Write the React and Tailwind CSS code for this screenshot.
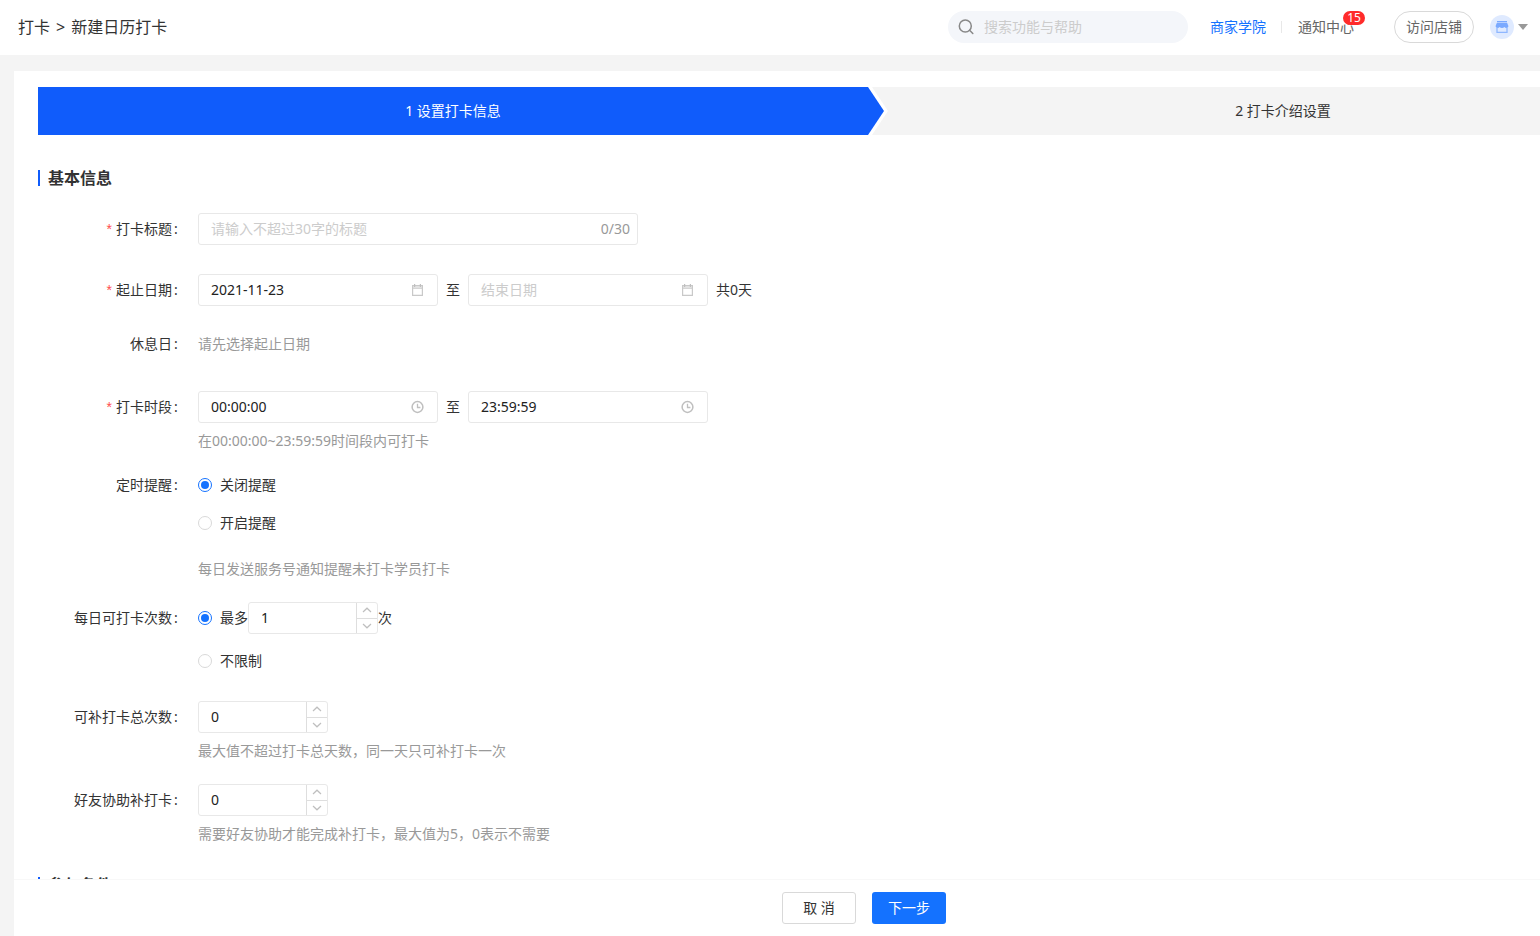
import { useState } from "react";

function SearchIcon() {
  return (
    <svg className="size-4 shrink-0" viewBox="0 0 16 16" fill="none" stroke="#888" strokeWidth="1.5" aria-hidden="true">
      <circle cx="7.3" cy="7" r="6" />
      <path d="M11.6 11.3 L14.8 14.5" strokeLinecap="round" />
    </svg>
  );
}

function CalendarIcon() {
  return (
    <svg className="size-3.5" viewBox="0 0 14 14" fill="currentColor" aria-hidden="true">
      <path d="M1 2 H12 V13 H1 Z M2.2 5.8 V11.8 H10.8 V5.8 Z" fillRule="evenodd" opacity="0.85" />
      <path d="M2.2 3.2 H10.8 V4.8 H2.2 Z" fill="#fff" opacity="0.6" />
      <path d="M3 1 H4.2 V4 H3 Z M8.8 1 H10 V4 H8.8 Z" />
    </svg>
  );
}

function ClockIcon() {
  return (
    <svg className="size-3.5" viewBox="0 0 14 14" fill="none" stroke="currentColor" aria-hidden="true">
      <circle cx="6.5" cy="7" r="5.4" strokeWidth="1.5" />
      <path d="M6.5 3.8 V7.5 H9.4" strokeWidth="1.3" />
    </svg>
  );
}

function Chevron({ up }) {
  return (
    <svg className="h-1.5 w-2.5" viewBox="0 0 10 6" fill="none" stroke="#bfbfbf" strokeWidth="1.2" aria-hidden="true">
      <path d={up ? "M1 5 L5 1.2 L9 5" : "M1 1 L5 4.8 L9 1"} />
    </svg>
  );
}

function ShopAvatar() {
  return (
    <svg className="size-6" viewBox="0 0 24 24" aria-hidden="true">
      <circle cx="12" cy="12" r="12" fill="#dfeaff" />
      <path d="M7 6 H17 V7.4 H7 Z" fill="#7aa9ff" />
      <path
        d="M6.8 8 H17.2 L18.4 11 C18.4 12.2 17.3 12.9 16.4 12.9 C15.5 12.9 15 12.5 14.4 12 C13.8 12.6 12.9 12.9 12 12.9 C11.1 12.9 10.2 12.6 9.6 12 C9 12.5 8.5 12.9 7.6 12.9 C6.7 12.9 5.6 12.2 5.6 11 Z"
        fill="#7aa9ff"
      />
      <path d="M7 12.6 V17.4 H17 V12.6" fill="none" stroke="#8fb7ff" strokeWidth="1.3" />
    </svg>
  );
}

function Header() {
  return (
    <header className="flex h-[55px] shrink-0 items-center justify-between bg-white pb-px pl-[18px] pr-3">
      <nav className="flex items-center gap-1.5 text-base text-[#333]" aria-label="位置">
        <a href="#list">打卡</a>
        <span>&gt;</span>
        <span>新建日历打卡</span>
      </nav>
      <div className="flex items-center">
        <label className="mr-[22px] flex h-8 w-60 items-center gap-2.5 rounded-full bg-[#f4f6fa] px-2.5">
          <SearchIcon />
          <input
            type="search"
            aria-label="搜索功能与帮助"
            placeholder="搜索功能与帮助"
            className="min-w-0 flex-1 bg-transparent leading-5 outline-none placeholder:text-[#ccc]"
          />
        </label>
        <a href="#academy" className="text-[#1472ff]">商家学院</a>
        <span className="ml-[15px] mr-4 h-3 w-px bg-[#e8e8e8]" />
        <a href="#notice" className="relative mr-10 text-[#666]">
          通知中心
          <span className="absolute -right-[11px] -top-1.5 flex h-3.5 w-[22px] items-center justify-center rounded-full bg-[#ff2b2b] text-xs leading-3 text-white">
            15
          </span>
        </a>
        <button type="button" className="mr-4 h-8 w-20 rounded-full border border-[#d9d9d9] text-[#666]">
          访问店铺
        </button>
        <button type="button" aria-label="账户" className="flex items-center gap-1">
          <ShopAvatar />
          <svg className="h-1.5 w-2.5" viewBox="0 0 10 6" aria-hidden="true">
            <path d="M0 0 H10 L5 6 Z" fill="#999" />
          </svg>
        </button>
      </div>
    </header>
  );
}

function Steps() {
  return (
    <ol className="flex h-12 text-sm">
      <li className="relative flex flex-1 items-center justify-center bg-[#105cfb] text-white" aria-current="step">
        1 设置打卡信息
        <svg className="absolute left-full top-0 h-12 w-5" viewBox="0 0 20 48" aria-hidden="true">
          <path d="M0 0 H4 L20 24 L4 48 H0 Z" fill="#fff" />
          <path d="M0 0 L16 24 L0 48 Z" fill="#105cfb" />
        </svg>
      </li>
      <li className="flex flex-1 items-center justify-center bg-[#f4f4f4] text-[#333]">2 打卡介绍设置</li>
    </ol>
  );
}

function SectionTitle({ children, className }) {
  return (
    <h2 className={`border-l-2 border-[#105cfb] pl-2 text-base font-bold leading-4 text-[#333] ${className}`}>
      {children}
    </h2>
  );
}

function Row({ label, htmlFor, required, tall, className, children }) {
  const Tag = htmlFor ? "label" : "span";
  return (
    <div className={`flex gap-5 ${className}`}>
      <Tag
        htmlFor={htmlFor}
        className={`flex w-[140px] shrink-0 items-center justify-end text-[#333] ${tall ? "h-8" : "h-5"}`}
      >
        {required && <span className="mr-1 font-['Liberation_Sans',sans-serif] text-[#ff4d4f]">*</span>}
        {label}
        <span className="ml-0.5 w-1">:</span>
      </Tag>
      <div>{children}</div>
    </div>
  );
}

function Picker({ id, label, value, placeholder, icon }) {
  return (
    <div className="flex h-8 w-60 items-center rounded-[3px] border border-[#e8e8e8] px-3 text-[#bfbfbf]">
      <input
        id={id}
        aria-label={label}
        defaultValue={value}
        placeholder={placeholder}
        className="min-w-0 flex-1 leading-5 text-[#222] outline-none placeholder:text-[#ccc]"
      />
      {icon}
    </div>
  );
}

function NumberField({ id, label, initial }) {
  const [value, setValue] = useState(initial);
  return (
    <div className="flex h-8 w-[130px] rounded-[3px] border border-[#e8e8e8]">
      <input
        id={id}
        type="number"
        aria-label={label}
        value={value}
        onChange={(e) => setValue(Number(e.target.value))}
        className="min-w-0 flex-1 pl-3 leading-5 text-[#222] outline-none [appearance:textfield] [&::-webkit-inner-spin-button]:appearance-none"
      />
      <div className="flex w-[21px] flex-col divide-y divide-[#dedede] border-l border-[#dedede]">
        <button type="button" aria-label="增加" onClick={() => setValue(value + 1)} className="flex flex-1 items-center justify-center">
          <Chevron up />
        </button>
        <button type="button" aria-label="减少" onClick={() => setValue(Math.max(0, value - 1))} className="flex flex-1 items-center justify-center">
          <Chevron />
        </button>
      </div>
    </div>
  );
}

function Radio({ id, name, checked, children }) {
  return (
    <label htmlFor={id} className="flex items-center gap-2 text-[#333]">
      <input
        id={id}
        type="radio"
        name={name}
        defaultChecked={checked}
        className="grid size-3.5 appearance-none place-content-center rounded-full border border-[#d9d9d9] bg-white before:size-2 before:rounded-full checked:border-[#1472ff] checked:before:bg-[#1472ff]"
      />
      {children}
    </label>
  );
}

function Hint({ children, className }) {
  return <p className={`text-[#999] ${className}`}>{children}</p>;
}

function Form() {
  const [title, setTitle] = useState("");
  return (
    <form>
      <Row label="打卡标题" htmlFor="title" required tall className="mt-[27px]">
        <div className="flex h-8 w-[440px] items-center rounded-[3px] border border-[#e8e8e8] pl-3 pr-[7px]">
          <input
            id="title"
            maxLength={30}
            value={title}
            onChange={(e) => setTitle(e.target.value)}
            placeholder="请输入不超过30字的标题"
            className="min-w-0 flex-1 leading-5 text-[#222] outline-none placeholder:text-[#ccc]"
          />
          <span className="text-[#999]">{title.length}/30</span>
        </div>
      </Row>

      <Row label="起止日期" htmlFor="start-date" required tall className="mt-[29px]">
        <div className="flex items-center gap-2 text-[#333]">
          <Picker id="start-date" value="2021-11-23" icon={<CalendarIcon />} />
          至
          <Picker id="end-date" label="结束日期" placeholder="结束日期" icon={<CalendarIcon />} />
          <span>共0天</span>
        </div>
      </Row>

      <Row label="休息日" className="mt-7">
        <Hint>请先选择起止日期</Hint>
      </Row>

      <Row label="打卡时段" htmlFor="start-time" required tall className="mt-[37px]">
        <div className="flex items-center gap-2 text-[#333]">
          <Picker id="start-time" value="00:00:00" icon={<ClockIcon />} />
          至
          <Picker id="end-time" label="结束时间" value="23:59:59" icon={<ClockIcon />} />
        </div>
        <Hint className="mt-2">在00:00:00~23:59:59时间段内可打卡</Hint>
      </Row>

      <Row label="定时提醒" className="mt-6">
        <Radio id="remind-off" name="remind" checked>关闭提醒</Radio>
        <div className="mt-[18px]">
          <Radio id="remind-on" name="remind">开启提醒</Radio>
        </div>
        <Hint className="mt-[26px]">每日发送服务号通知提醒未打卡学员打卡</Hint>
      </Row>

      <Row label="每日可打卡次数" tall className="mt-[23px]">
        <div className="flex items-center text-[#333]">
          <Radio id="limit-max" name="limit" checked>最多</Radio>
          <NumberField id="limit" label="每日最多打卡次数" initial={1} />
          次
        </div>
        <div className="mt-[17px]">
          <Radio id="limit-none" name="limit">不限制</Radio>
        </div>
      </Row>

      <Row label="可补打卡总次数" htmlFor="makeup" tall className="mt-[30px]">
        <NumberField id="makeup" initial={0} />
        <Hint className="mt-2">最大值不超过打卡总天数，同一天只可补打卡一次</Hint>
      </Row>

      <Row label="好友协助补打卡" htmlFor="assist" tall className="mt-[23px]">
        <NumberField id="assist" initial={0} />
        <Hint className="mt-2">需要好友协助才能完成补打卡，最大值为5，0表示不需要</Hint>
      </Row>
    </form>
  );
}

export default function App() {
  return (
    <div
      lang="zh-CN"
      className="flex h-screen flex-col overflow-hidden bg-[#f4f4f4] font-['Noto_Sans','Noto_Sans_CJK_SC',sans-serif] text-sm leading-5"
    >
      <Header />
      <main className="flex min-h-0 flex-1 overflow-hidden pl-3.5 pt-4">
        <div className="flex min-w-[1700px] flex-1 flex-col bg-white">
          <div className="min-h-0 flex-1 overflow-hidden pl-6 pr-4 pt-4">
            <Steps />
            <SectionTitle className="mt-[35px]">基本信息</SectionTitle>
            <Form />
            <SectionTitle className="mt-[33px]">参与条件</SectionTitle>
          </div>
          <footer className="flex shrink-0 justify-center gap-4 border-t border-[#f8f8f8] bg-white py-3">
            <button type="button" className="h-8 w-[74px] rounded-[3px] border border-[#d9d9d9] bg-white text-[#333]">
              取 消
            </button>
            <button type="button" className="h-8 w-[74px] rounded-[3px] bg-[#1472ff] text-white">
              下一步
            </button>
          </footer>
        </div>
      </main>
    </div>
  );
}
